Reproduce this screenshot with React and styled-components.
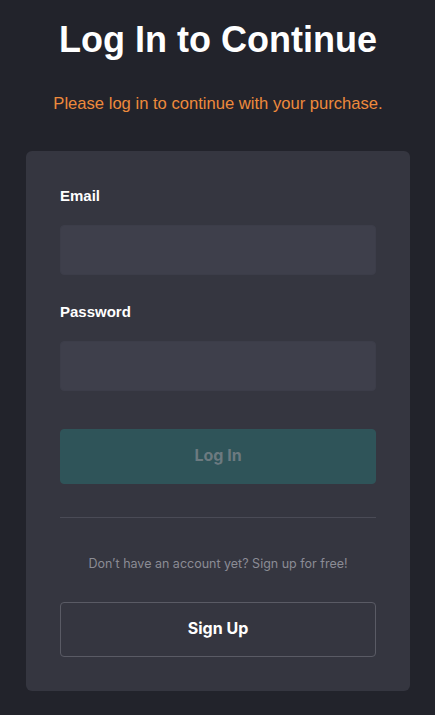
import styled, { createGlobalStyle } from "styled-components";

const GlobalStyle = createGlobalStyle`
  html, body {
    margin: 0;
    padding: 0;
    background: #22232b;
  }

  body {
    font-family: "Liberation Sans", Arial, sans-serif;
    color: #ffffff;
  }

  * {
    box-sizing: border-box;
  }
`;

const Page = styled.main`
  width: 435px;
  min-height: 715px;
  padding: 16px 25px 25px 26px;
  display: flex;
  flex-direction: column;
  align-items: center;
`;

const Title = styled.h1`
  margin: 0;
  font-size: 36px;
  line-height: 48px;
  font-weight: 700;
  color: #ffffff;
  text-align: center;
`;

const Subtitle = styled.p`
  margin: 30px 0 0;
  font-size: 16.6px;
  line-height: 20px;
  color: #ee8a3c;
  text-align: center;
`;

const Card = styled.form`
  width: 100%;
  margin-top: 37px;
  background: #353640;
  border-radius: 6px;
  padding: 36px 34px 34px;
  display: flex;
  flex-direction: column;
`;

const Field = styled.div`
  display: flex;
  flex-direction: column;
  margin-bottom: ${(p) => p.$gap || 0}px;
`;

const Label = styled.label`
  font-size: 15px;
  line-height: 18px;
  font-weight: 700;
  color: #ffffff;
  margin-bottom: 20px;
`;

const Input = styled.input`
  height: 50px;
  width: 100%;
  border: 1px solid #3c3d49;
  border-radius: 4px;
  background: #3e3f4b;
  color: #fff;
  padding: 0 14px;
  font-size: 15px;
  outline: none;
`;

const Button = styled.button`
  height: 55px;
  width: 100%;
  padding: 0 0 4px;
  border-radius: 4px;
  font-family: Inter, "Liberation Sans", sans-serif;
  font-size: 16px;
  font-weight: 700;
  cursor: pointer;
  background: ${(p) => (p.$variant === "outline" ? "transparent" : "#2f5459")};
  color: ${(p) => (p.$variant === "outline" ? "#ffffff" : "#6c7a80")};
  border: 1px solid ${(p) => (p.$variant === "outline" ? "#5a5b65" : "#2f5459")};
`;

const Divider = styled.hr`
  margin: 33px 0 0;
  border: 0;
  border-top: 1px solid #4a4b56;
`;

const Hint = styled.p`
  margin: 37px 0 29px;
  font-family: Inter, "Liberation Sans", sans-serif;
  font-size: 12.5px;
  line-height: 18px;
  color: #8b8c95;
  text-align: center;
`;

export default function App() {
  function handleSubmit(e) {
    e.preventDefault();
  }

  return (
    <>
      <GlobalStyle />
      <Page>
        <Title>Log In to Continue</Title>
        <Subtitle>Please log in to continue with your purchase.</Subtitle>
        <Card onSubmit={handleSubmit}>
          <Field $gap={28}>
            <Label htmlFor="email">Email</Label>
            <Input id="email" type="email" name="email" />
          </Field>
          <Field $gap={38}>
            <Label htmlFor="password">Password</Label>
            <Input id="password" type="password" name="password" />
          </Field>
          <Button type="submit" disabled>
            Log In
          </Button>
          <Divider />
          <Hint>Don’t have an account yet? Sign up for free!</Hint>
          <Button type="button" $variant="outline">
            Sign Up
          </Button>
        </Card>
      </Page>
    </>
  );
}
